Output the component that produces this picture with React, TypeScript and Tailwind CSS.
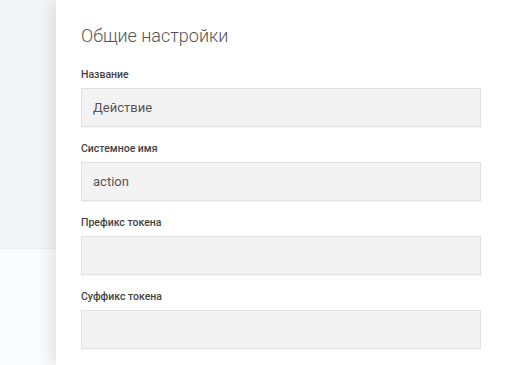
const fields = [
  { label: 'Название', value: 'Действие' },
  { label: 'Системное имя', value: 'action' },
  { label: 'Префикс токена', value: '' },
  { label: 'Суффикс токена', value: '' },
]

export default function App() {
  return (
    <div className="flex h-[365px] w-[507px] overflow-hidden bg-white" style={{ fontFamily: 'Roboto, "Noto Sans", sans-serif' }}>
      {/* Left backdrop */}
      <div className="flex w-[56px] shrink-0 flex-col">
        <div className="h-[249px] border-b border-[#eceef1] bg-[#f4f5f7]" />
        <div className="flex-1 bg-[#fafbfc]" />
      </div>

      {/* Panel */}
      <div className="relative flex-1 bg-white pl-[25px] pr-[26px] pt-[24px] shadow-[-6px_0_14px_rgba(0,0,0,0.09)]">
        <h2 className="text-[18px] font-light leading-[24px] text-[#555]">Общие настройки</h2>
        <div className="mt-[20px] flex flex-col gap-[15px]">
          {fields.map((f) => (
            <div key={f.label}>
              <label className="block text-[10.5px] font-medium leading-[14px] text-[#444]">{f.label}</label>
              <div className="mt-[6px] flex h-[39px] items-center border border-[#e0e1e3] bg-[#f3f3f4] px-[11px] text-[13px] text-[#555] shadow-[0_1px_0_rgba(0,0,0,0.03)]">
                {f.value}
              </div>
            </div>
          ))}
        </div>
      </div>
    </div>
  )
}
